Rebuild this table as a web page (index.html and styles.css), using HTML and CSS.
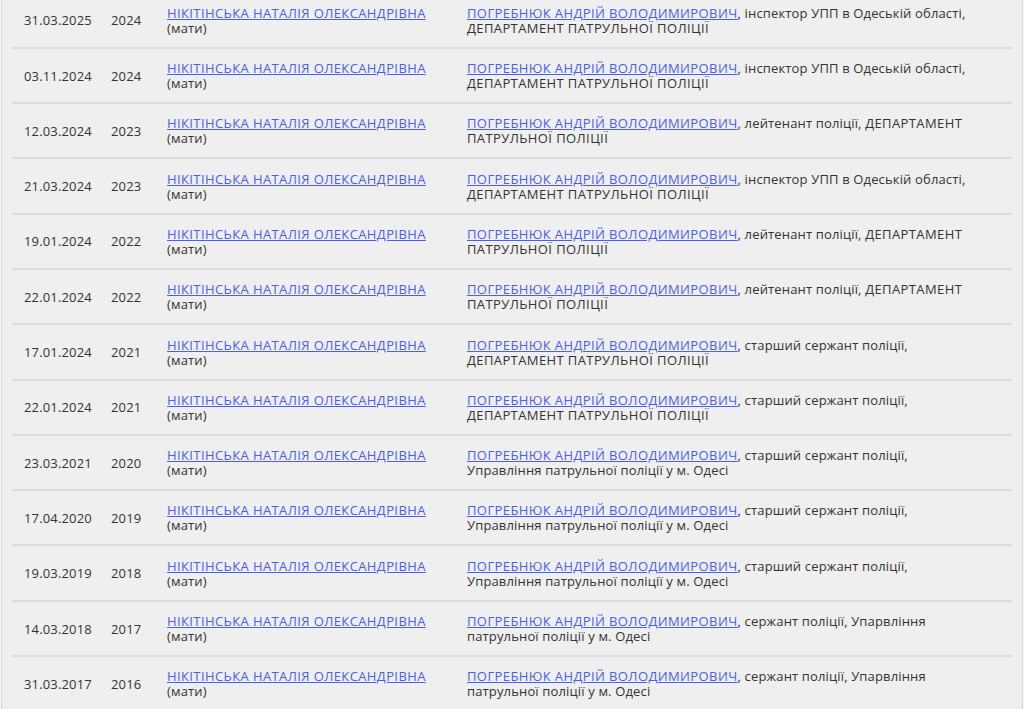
FILE: index.html
```html
<!DOCTYPE html>
<html lang="uk">
<head>
<meta charset="utf-8">
<link rel="stylesheet" href="styles.css">
</head>
<body>
<div class="page">
  <div class="table">
    <div class="row"><div class="c date">31.03.2025</div><div class="c year">2024</div><div class="c name"><a href="#">НІКІТІНСЬКА НАТАЛІЯ ОЛЕКСАНДРІВНА</a><br>(мати)</div><div class="c off"><a href="#">ПОГРЕБНЮК АНДРІЙ ВОЛОДИМИРОВИЧ</a>, інспектор УПП в Одеській області, <span class="caps">ДЕПАРТАМЕНТ ПАТРУЛЬНОЇ ПОЛІЦІЇ</span></div></div>
    <div class="row"><div class="c date">03.11.2024</div><div class="c year">2024</div><div class="c name"><a href="#">НІКІТІНСЬКА НАТАЛІЯ ОЛЕКСАНДРІВНА</a><br>(мати)</div><div class="c off"><a href="#">ПОГРЕБНЮК АНДРІЙ ВОЛОДИМИРОВИЧ</a>, інспектор УПП в Одеській області, <span class="caps">ДЕПАРТАМЕНТ ПАТРУЛЬНОЇ ПОЛІЦІЇ</span></div></div>
    <div class="row"><div class="c date">12.03.2024</div><div class="c year">2023</div><div class="c name"><a href="#">НІКІТІНСЬКА НАТАЛІЯ ОЛЕКСАНДРІВНА</a><br>(мати)</div><div class="c off"><a href="#">ПОГРЕБНЮК АНДРІЙ ВОЛОДИМИРОВИЧ</a>, лейтенант поліції, <span class="caps">ДЕПАРТАМЕНТ ПАТРУЛЬНОЇ ПОЛІЦІЇ</span></div></div>
    <div class="row"><div class="c date">21.03.2024</div><div class="c year">2023</div><div class="c name"><a href="#">НІКІТІНСЬКА НАТАЛІЯ ОЛЕКСАНДРІВНА</a><br>(мати)</div><div class="c off"><a href="#">ПОГРЕБНЮК АНДРІЙ ВОЛОДИМИРОВИЧ</a>, інспектор УПП в Одеській області, <span class="caps">ДЕПАРТАМЕНТ ПАТРУЛЬНОЇ ПОЛІЦІЇ</span></div></div>
    <div class="row"><div class="c date">19.01.2024</div><div class="c year">2022</div><div class="c name"><a href="#">НІКІТІНСЬКА НАТАЛІЯ ОЛЕКСАНДРІВНА</a><br>(мати)</div><div class="c off"><a href="#">ПОГРЕБНЮК АНДРІЙ ВОЛОДИМИРОВИЧ</a>, лейтенант поліції, <span class="caps">ДЕПАРТАМЕНТ ПАТРУЛЬНОЇ ПОЛІЦІЇ</span></div></div>
    <div class="row"><div class="c date">22.01.2024</div><div class="c year">2022</div><div class="c name"><a href="#">НІКІТІНСЬКА НАТАЛІЯ ОЛЕКСАНДРІВНА</a><br>(мати)</div><div class="c off"><a href="#">ПОГРЕБНЮК АНДРІЙ ВОЛОДИМИРОВИЧ</a>, лейтенант поліції, <span class="caps">ДЕПАРТАМЕНТ ПАТРУЛЬНОЇ ПОЛІЦІЇ</span></div></div>
    <div class="row"><div class="c date">17.01.2024</div><div class="c year">2021</div><div class="c name"><a href="#">НІКІТІНСЬКА НАТАЛІЯ ОЛЕКСАНДРІВНА</a><br>(мати)</div><div class="c off"><a href="#">ПОГРЕБНЮК АНДРІЙ ВОЛОДИМИРОВИЧ</a>, старший сержант поліції, <span class="caps">ДЕПАРТАМЕНТ ПАТРУЛЬНОЇ ПОЛІЦІЇ</span></div></div>
    <div class="row"><div class="c date">22.01.2024</div><div class="c year">2021</div><div class="c name"><a href="#">НІКІТІНСЬКА НАТАЛІЯ ОЛЕКСАНДРІВНА</a><br>(мати)</div><div class="c off"><a href="#">ПОГРЕБНЮК АНДРІЙ ВОЛОДИМИРОВИЧ</a>, старший сержант поліції, <span class="caps">ДЕПАРТАМЕНТ ПАТРУЛЬНОЇ ПОЛІЦІЇ</span></div></div>
    <div class="row"><div class="c date">23.03.2021</div><div class="c year">2020</div><div class="c name"><a href="#">НІКІТІНСЬКА НАТАЛІЯ ОЛЕКСАНДРІВНА</a><br>(мати)</div><div class="c off"><a href="#">ПОГРЕБНЮК АНДРІЙ ВОЛОДИМИРОВИЧ</a>, старший сержант поліції, Управління патрульної поліції у м. Одесі</div></div>
    <div class="row"><div class="c date">17.04.2020</div><div class="c year">2019</div><div class="c name"><a href="#">НІКІТІНСЬКА НАТАЛІЯ ОЛЕКСАНДРІВНА</a><br>(мати)</div><div class="c off"><a href="#">ПОГРЕБНЮК АНДРІЙ ВОЛОДИМИРОВИЧ</a>, старший сержант поліції, Управління патрульної поліції у м. Одесі</div></div>
    <div class="row"><div class="c date">19.03.2019</div><div class="c year">2018</div><div class="c name"><a href="#">НІКІТІНСЬКА НАТАЛІЯ ОЛЕКСАНДРІВНА</a><br>(мати)</div><div class="c off"><a href="#">ПОГРЕБНЮК АНДРІЙ ВОЛОДИМИРОВИЧ</a>, старший сержант поліції, Управління патрульної поліції у м. Одесі</div></div>
    <div class="row"><div class="c date">14.03.2018</div><div class="c year">2017</div><div class="c name"><a href="#">НІКІТІНСЬКА НАТАЛІЯ ОЛЕКСАНДРІВНА</a><br>(мати)</div><div class="c off"><a href="#">ПОГРЕБНЮК АНДРІЙ ВОЛОДИМИРОВИЧ</a>, сержант поліції, Упарвління патрульної поліції у м. Одесі</div></div>
    <div class="row"><div class="c date">31.03.2017</div><div class="c year">2016</div><div class="c name"><a href="#">НІКІТІНСЬКА НАТАЛІЯ ОЛЕКСАНДРІВНА</a><br>(мати)</div><div class="c off"><a href="#">ПОГРЕБНЮК АНДРІЙ ВОЛОДИМИРОВИЧ</a>, сержант поліції, Упарвління патрульної поліції у м. Одесі</div></div>
  </div>
</div>
</body>
</html>
```
FILE: styles.css
```css
html, body {
  margin: 0;
  padding: 0;
  background: #f7f7f7;
}
body {
  font-family: "Open Sans", "Liberation Sans", sans-serif;
  font-size: 13px;
  line-height: 15px;
  letter-spacing: 0.15px;
  color: #333333;
  overflow: hidden;
  height: 709px;
}
.page {
  margin-left: 1px;
  width: 1020px;
  background: #efefef;
  border-left: 1px solid #d9d9d9;
  border-right: 1px solid #d9d9d9;
  min-height: 760px;
  margin-top: -6.5px;
}
.table {
  margin: 0 10px 0 10px;
}
.row {
  display: grid;
  grid-template-columns: 87px 56px 300px 1fr;
  align-items: center;
  padding: 12.3px 0 11px;
  border-bottom: 2px solid #dcdcdc;
}
.c {
  padding-left: 12px;
}
.off {
  padding-right: 46px;
}
a {
  color: #4a5ef0;
  text-decoration: underline;
  letter-spacing: 0.4px;
}
.caps {
  letter-spacing: 0.4px;
}
```
